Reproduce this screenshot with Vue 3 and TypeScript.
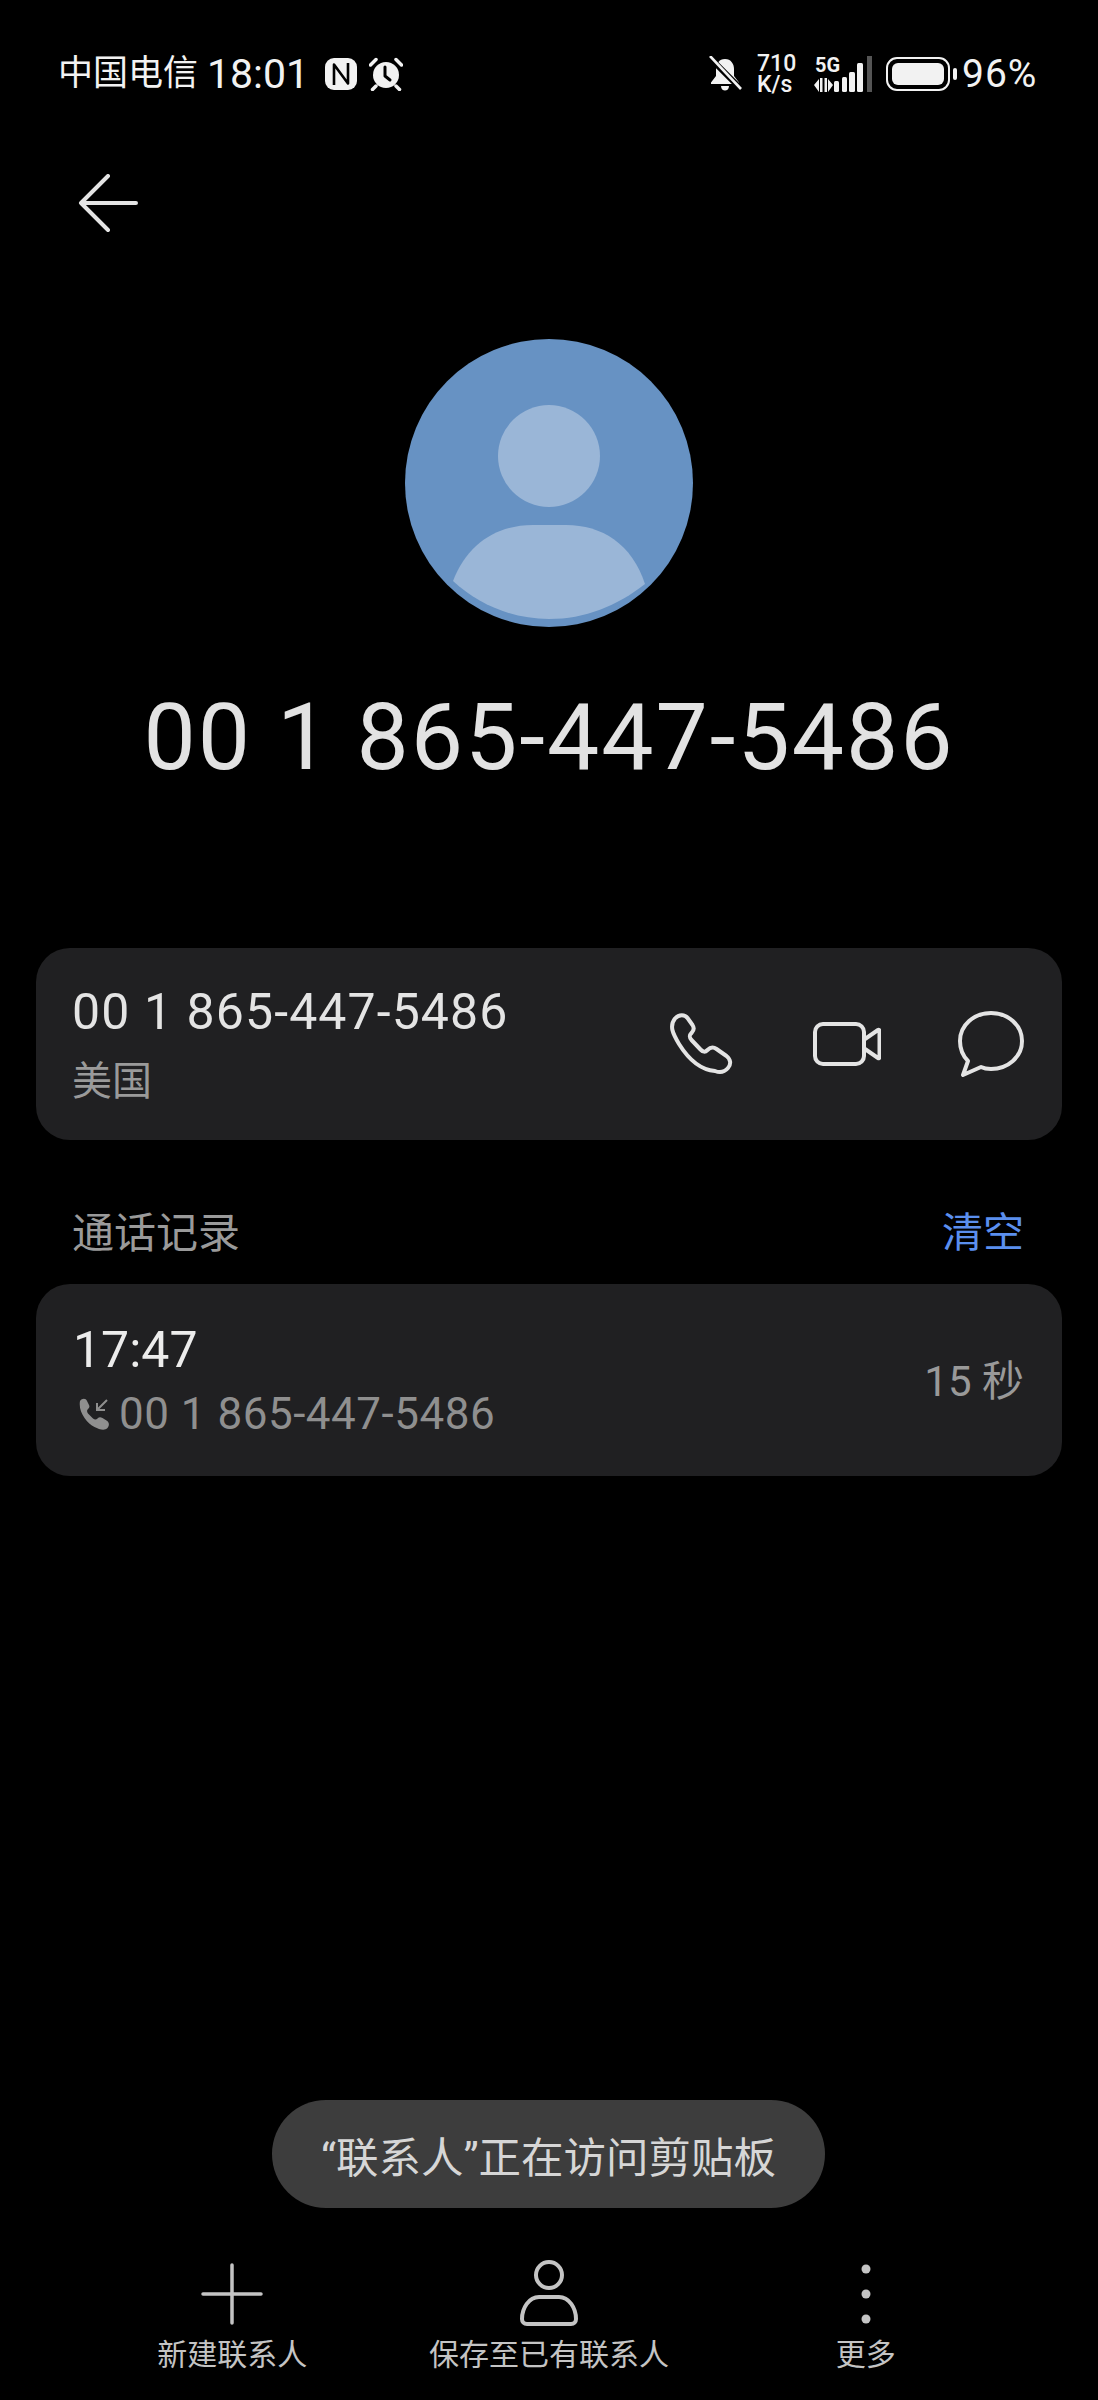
<script setup lang="ts">
const number = '00 1 865-447-5486'
const actions = [
  { label: '新建联系人', icon: 'add' },
  { label: '保存至已有联系人', icon: 'person' },
  { label: '更多', icon: 'more' },
]
</script>

<template>
  <div class="page">
    <header class="status">
      <div class="status-left">
        <span class="carrier">中国电信</span>
        <span class="clock">18:01</span>
        <svg class="nfc" viewBox="0 0 32 32">
          <rect x="0" y="0" width="32" height="32" rx="9" fill="#f2f2f2" />
          <path d="M9 27V6.500L23 25.500V5" fill="none" stroke="#000" stroke-width="2.600" stroke-linejoin="round" />
        </svg>
        <svg class="alarm" viewBox="0 0 34 34">
          <circle cx="17" cy="18" r="13" fill="#f2f2f2" />
          <path d="M1.500 8 7 2.500M32.500 8 27 2.500M7 29l-3.500 3.500M27 29l3.500 3.500" stroke="#f2f2f2" stroke-width="3.500" stroke-linecap="round" />
          <path d="M16 10v9l5 4" fill="none" stroke="#000" stroke-width="3" stroke-linecap="round" stroke-linejoin="round" />
        </svg>
      </div>
      <div class="status-right">
        <svg class="bell" viewBox="0 0 34 36">
          <path d="M17 3c-6 0-9 5-9 10v7l-5 6.500V28h28v-1.500L26 20v-7c0-5-3-10-9-10ZM13 30h8c0 3-2 4.500-4 4.500S13 33 13 30Z" fill="#f2f2f2" />
          <path d="M1 1l32 32" stroke="#000" stroke-width="6" />
          <path d="M2 0l31 33" stroke="#f2f2f2" stroke-width="2.600" />
        </svg>
        <div class="speed"><span>710</span><span>K/s</span></div>
        <div class="net">
          <span class="five-g">5G</span>
          <svg class="signal" viewBox="0 0 58 36">
            <rect x="53" y="0" width="5" height="36" fill="#555" />
            <rect x="43" y="7" width="6" height="29" rx="1.500" fill="#f2f2f2" />
            <rect x="35" y="16" width="6" height="20" rx="1.500" fill="#f2f2f2" />
            <rect x="28" y="21" width="5" height="15" rx="1.500" fill="#f2f2f2" />
            <rect x="20" y="25" width="5" height="11" rx="1.500" fill="#f2f2f2" />
            <path d="M0 29l5-6v13ZM6 22h2.500v14H6ZM10.500 22H13v14h-2.500ZM14 23l5 6-5 7Z" fill="#f2f2f2" />
          </svg>
        </div>
        <div class="battery"><span class="battery-fill"></span></div>
        <span class="battery-nub"></span>
        <span class="percent">96%</span>
      </div>
    </header>

    <svg class="back" viewBox="0 0 60 60">
      <path d="M30 2 3 29l27 27M3 29h55" fill="none" stroke="#e4e4e4" stroke-width="4" stroke-linecap="round" stroke-linejoin="round" />
    </svg>

    <svg class="avatar" viewBox="0 0 288 288">
      <circle cx="144" cy="144" r="144" fill="#6792c3" />
      <circle cx="144" cy="117" r="51" fill="#9ab6d7" />
      <path d="M48 242C62 205 92 186 128 186h33c36 0 66 19 79 59-28 22-60 35-96 35s-70-14-96-38Z" fill="#9ab6d7" />
    </svg>

    <h1 class="title">{{ number }}</h1>

    <section class="card contact">
      <div class="contact-text">
        <div class="contact-number">{{ number }}</div>
        <div class="contact-region">美国</div>
      </div>
      <div class="contact-actions">
        <svg class="phone" viewBox="0 0 66 66">
          <path d="M6 5.500C10 1 16 1.500 18.500 5l5 7c2 3 1.500 5.500-1 8-2.500 2.500-2.500 4 0 7l9 9.500c2.500 2.500 4.500 3 7 .5 3-3 5.500-3.500 9-1l10 7c4 3 5 8 1.500 12-3.500 4-8 5-13 3C33 57 20 47 10 31 4 21 0 13 6 5.500Z" fill="none" stroke="#e4e4e4" stroke-width="4" stroke-linejoin="round" />
        </svg>
        <svg class="video" viewBox="0 0 68 44">
          <rect x="2" y="2" width="49" height="40" rx="8" fill="none" stroke="#e4e4e4" stroke-width="4" />
          <path d="M52 17 65 8c.8-.5 1.500 0 1.500 1v26c0 1-.7 1.500-1.500 1l-13-9" fill="none" stroke="#e4e4e4" stroke-width="4" stroke-linejoin="round" />
        </svg>
        <svg class="bubble" viewBox="0 0 66 66">
          <path d="M33 2c17 0 31 12 31 28S50 58 33 58c-4 0-7-.5-10-2L5 64l5-14C5 45 2 38 2 30 2 14 16 2 33 2Z" fill="none" stroke="#e4e4e4" stroke-width="4" stroke-linejoin="round" />
        </svg>
      </div>
    </section>

    <div class="log-head">
      <span class="log-title">通话记录</span>
      <span class="log-clear">清空</span>
    </div>

    <section class="card log">
      <div>
        <div class="log-time">17:47</div>
        <div class="log-number">
          <svg class="incoming" viewBox="0 0 32 32">
            <path d="M2 3c2-3 6-3 7 0l2 4c1 2 0 3-1 4-1.500 1.500-1 3 0 4.500l5 5c1.500 1 3 1.500 4.500 0 1.500-1.500 3-1.500 5-.5l4 2.500c3 1.500 3 5 1 7.500-3 3-8 1.500-13-1C9 25 0 14 2 3Z" fill="#8f8f8f" />
            <path d="M29 2 19 12M19 5v7h8" fill="none" stroke="#8f8f8f" stroke-width="2" />
          </svg>
          <span>{{ number }}</span>
        </div>
      </div>
      <div class="log-duration">15 秒</div>
    </section>

    <div class="toast">“联系人”正在访问剪贴板</div>

    <nav class="actions">
      <div v-for="a in actions" :key="a.label" class="action">
        <svg class="action-icon" viewBox="0 0 64 68">
          <path v-if="a.icon === 'add'" d="M32 5v58M3 34h58" fill="none" stroke="#c4c4c4" stroke-width="3.500" stroke-linecap="round" />
          <g v-else-if="a.icon === 'person'" fill="none" stroke="#c4c4c4" stroke-width="4">
            <ellipse cx="32" cy="15" rx="13" ry="13" />
            <path d="M22 37h20c10 0 17 11 17 22 0 3-2 5-5 5H10c-3 0-5-2-5-5 0-11 7-22 17-22Z" />
          </g>
          <g v-else fill="#c4c4c4">
            <ellipse cx="32" cy="9" rx="4.500" ry="4.500" />
            <ellipse cx="32" cy="34" rx="4.500" ry="4.500" />
            <ellipse cx="32" cy="59" rx="4.500" ry="4.500" />
          </g>
        </svg>
        <span class="action-label">{{ a.label }}</span>
      </div>
    </nav>
  </div>
</template>

<style>
html, body { background: #000; }
</style>

<style scoped>
.page {
  position: relative;
  width: 1098px;
  height: 2400px;
  background: #000;
  display: flex;
  flex-direction: column;
  align-items: center;
  overflow: hidden;
  font-family: Roboto, "Noto Sans CJK SC", sans-serif;
}
.status {
  align-self: stretch;
  height: 40px;
  margin-top: 54px;
  padding: 0 58px;
  display: flex;
  justify-content: space-between;
  align-items: center;
  color: #f2f2f2;
}
.status-left, .status-right { display: flex; align-items: center; }
.carrier { font-size: 35px; line-height: 40px; white-space: nowrap; }
.clock { margin-left: 9px; font-size: 41px; line-height: 40px; white-space: nowrap; }
.nfc { width: 32px; height: 32px; margin-left: 16px; }
.alarm { width: 34px; height: 34px; margin-left: 12px; }
.bell { width: 34px; height: 36px; }
.speed {
  display: flex;
  flex-direction: column;
  width: 43px;
  margin-left: 15px;
  font-size: 23px;
  line-height: 21px;
  font-weight: 500;
  white-space: nowrap;
}
.net { position: relative; width: 58px; height: 36px; margin-left: 14px; }
.five-g { position: absolute; left: 1px; top: -1px; font-size: 20px; line-height: 20px; font-weight: 700; }
.signal { width: 58px; height: 36px; }
.battery {
  width: 64px;
  height: 34px;
  margin-left: 14px;
  padding: 4px;
  border: 2.500px solid #f2f2f2;
  border-radius: 11px;
  box-sizing: border-box;
}
.battery-fill { display: block; height: 100%; background: #f2f2f2; border-radius: 6px; }
.battery-nub { width: 4px; height: 12px; margin-left: 3px; background: #f2f2f2; border-radius: 2px; }
.percent { width: 78px; margin-left: 5px; font-size: 39px; letter-spacing: 1px; white-space: nowrap; }

.back { align-self: flex-start; width: 60px; height: 60px; margin: 80px 0 0 78px; }
.avatar { width: 288px; height: 288px; margin-top: 105px; flex: none; }
.title {
  margin: 58px 0 0;
  font-size: 93px;
  line-height: 106px;
  font-weight: 400;
  letter-spacing: 2px;
  color: #e2e2e2;
  white-space: nowrap;
}
.card {
  width: 1026px;
  height: 192px;
  flex: none;
  box-sizing: border-box;
  background: #202022;
  border-radius: 34px;
  display: flex;
  align-items: center;
  justify-content: space-between;
  padding: 0 38px 0 36px;
}
.contact { margin-top: 157px; }
.contact-number { font-size: 50px; line-height: 60px; color: #e4e4e4; white-space: nowrap; letter-spacing: 1.100px; }
.contact-region { margin-top: 15px; font-size: 40px; line-height: 50px; color: #9a9a9a; }
.contact-text { margin-top: 1px; }
.contact-actions { display: flex; align-items: center; }
.phone { width: 66px; height: 66px; margin-top: 4px; }
.video { width: 68px; height: 44px; margin-left: 78px; }
.bubble { width: 66px; height: 66px; margin-left: 77px; }
.log-head {
  width: 1026px;
  box-sizing: border-box;
  padding: 0 38px 0 36px;
  margin-top: 67px;
  height: 44px;
  display: flex;
  justify-content: space-between;
  align-items: center;
}
.log-title { font-size: 42px; color: #9a9a9a; }
.log-clear { font-size: 41px; color: #5b8fee; }
.log { margin-top: 33px; }
.log-time { font-size: 50px; line-height: 60px; font-weight: 400; color: #ececec; padding-left: 1px; }
.log-number {
  display: flex;
  align-items: center;
  margin-top: 8px;
  font-size: 44px;
  line-height: 52px;
  letter-spacing: .5px;
  color: #8f8f8f;
  white-space: nowrap;
}
.incoming { width: 32px; height: 32px; margin: 0 9px 0 6px; }
.log-duration { margin-bottom: 6px; font-size: 42px; color: #999; }

.toast {
  position: absolute;
  left: 272px;
  top: 2100px;
  width: 553px;
  height: 108px;
  border-radius: 54px;
  background: #3d3d3d;
  color: #d6d6d6;
  font-size: 42.500px;
  display: flex;
  align-items: center;
  justify-content: center;
  white-space: nowrap;
}
.actions {
  margin-top: auto;
  width: 950px;
  padding-bottom: 26px;
  display: grid;
  grid-template-columns: repeat(3, 1fr);
}
.action { display: flex; flex-direction: column; align-items: center; }
.action-icon { width: 64px; height: 68px; }
.action-label { margin-top: 8px; font-size: 30px; line-height: 38px; color: #c4c4c4; white-space: nowrap; }
</style>
